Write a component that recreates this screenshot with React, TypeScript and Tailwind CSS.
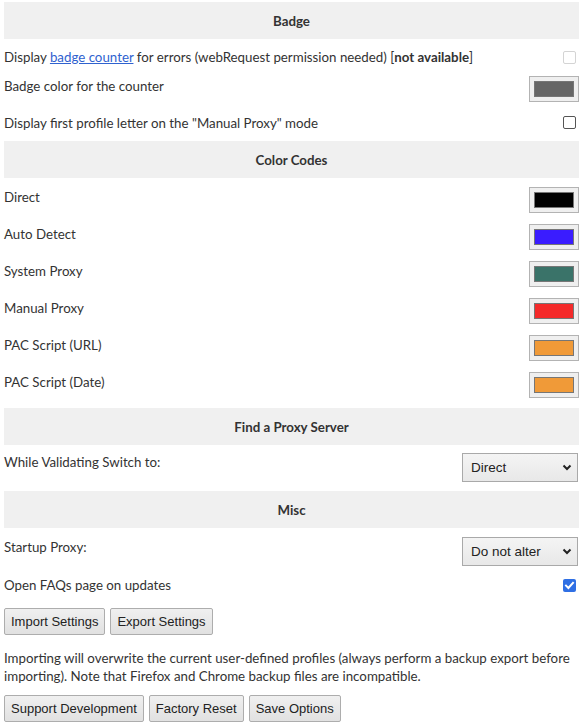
import React from "react"

const body = "font-['Lato','Noto_Sans',sans-serif] text-[13.3px] leading-[18px] text-[#333]"

function Header({ title, className = "" }: { title: string; className?: string }) {
  return (
    <div className={`h-[37px] bg-[#f0f0f0] flex items-center justify-center font-bold ${className}`}>
      {title}
    </div>
  )
}

function Swatch({ color, className = "" }: { color: string; className?: string }) {
  return (
    <div className={`w-[50px] h-[26px] border border-[#b3b3b3] bg-[#efefef] flex items-center justify-center ${className}`}>
      <div className="w-[40px] h-[16px] border border-[#767676]" style={{ backgroundColor: color }} />
    </div>
  )
}

function Checkbox({ state, className = "" }: { state: "disabled" | "off" | "on"; className?: string }) {
  if (state === "on") {
    return (
      <div className={`w-[13px] h-[13px] rounded-[2px] bg-[#2f6fe4] flex items-center justify-center ${className}`}>
        <svg width="11" height="11" viewBox="0 0 11 11">
          <path d="M2 5.6 L4.4 8 L9 2.8" fill="none" stroke="#fff" strokeWidth="2" strokeLinecap="square" />
        </svg>
      </div>
    )
  }
  return (
    <div
      className={`w-[13px] h-[13px] rounded-[2px] border bg-white ${
        state === "disabled" ? "border-[#d4d4d4] bg-[#fafafa]" : "border-[#555]"
      } ${className}`}
    />
  )
}

function Select({ value, className = "" }: { value: string; className?: string }) {
  return (
    <div
      className={`w-[116px] h-[29px] border border-[#a9a9a9] bg-gradient-to-b from-[#f4f4f4] to-[#e8e8e8] flex items-center justify-between pl-[8px] pr-[5px] font-['Liberation_Sans',Arial,sans-serif] text-[13.5px] text-[#222] ${className}`}
    >
      <span>{value}</span>
      <svg width="10" height="7" viewBox="0 0 10 7">
        <path d="M1.5 1.5 L5 5 L8.5 1.5" fill="none" stroke="#222" strokeWidth="2" />
      </svg>
    </div>
  )
}

function Btn({ children }: { children: React.ReactNode }) {
  return (
    <button className="h-[27px] px-[6px] border border-[#adadad] rounded-[2px] bg-gradient-to-b from-[#f0f0f0] to-[#e1e1e1] font-['Liberation_Sans',Arial,sans-serif] text-[13px] text-[#222]">
      {children}
    </button>
  )
}

const colors = [
  { name: "Direct", color: "#000000" },
  { name: "Auto Detect", color: "#3a1cff" },
  { name: "System Proxy", color: "#3a7369" },
  { name: "Manual Proxy", color: "#f42a2a" },
  { name: "PAC Script (URL)", color: "#f09a38" },
  { name: "PAC Script (Date)", color: "#f09a38" },
]

export default function App() {
  return (
    <div className={`${body} w-[583px] min-h-[725px] bg-white px-[4px] pt-[2px]`}>
      <Header title="Badge" />
      <div className="h-[36px] flex items-center justify-between">
        <span>
          Display <a className="text-[#2f62cf] underline">badge counter</a> for errors (webRequest permission needed) [
          <b>not available</b>]
        </span>
        <Checkbox state="disabled" className="mr-[3px]" />
      </div>
      <div className="h-[29px] flex items-start justify-between">
        <span className="pt-[2px]">Badge color for the counter</span>
        <Swatch color="#666666" className="mt-[1px]" />
      </div>
      <div className="h-[37px] flex items-center justify-between">
        <span>Display first profile letter on the "Manual Proxy" mode</span>
        <Checkbox state="off" className="mr-[3px]" />
      </div>

      <Header title="Color Codes" />
      {colors.map((c) => (
        <div key={c.name} className="h-[37px] flex items-start justify-between">
          <span className="pt-[10px]">{c.name}</span>
          <Swatch color={c.color} className="mt-[9px]" />
        </div>
      ))}

      <Header title="Find a Proxy Server" className="mt-[8px]" />
      <div className="h-[46px] flex items-start justify-between">
        <span className="pt-[8px]">While Validating Switch to:</span>
        <Select value="Direct" className="mt-[8px] mr-[1px]" />
      </div>

      <Header title="Misc" />
      <div className="h-[43px] flex items-start justify-between">
        <span className="pt-[10px]">Startup Proxy:</span>
        <Select value="Do not alter" className="mt-[9px] mr-[1px]" />
      </div>
      <div className="h-[29px] flex items-start justify-between">
        <span className="pt-[5px]">Open FAQs page on updates</span>
        <Checkbox state="on" className="mt-[8px] mr-[3px]" />
      </div>

      <div className="mt-[8px] flex gap-[5px]">
        <Btn>Import Settings</Btn>
        <Btn>Export Settings</Btn>
      </div>
      <p className="mt-[14px]">
        Importing will overwrite the current user-defined profiles (always perform a backup export before
        <br />
        importing). Note that Firefox and Chrome backup files are incompatible.
      </p>
      <div className="mt-[10px] flex gap-[5px]">
        <Btn>Support Development</Btn>
        <Btn>Factory Reset</Btn>
        <Btn>Save Options</Btn>
      </div>
    </div>
  )
}
